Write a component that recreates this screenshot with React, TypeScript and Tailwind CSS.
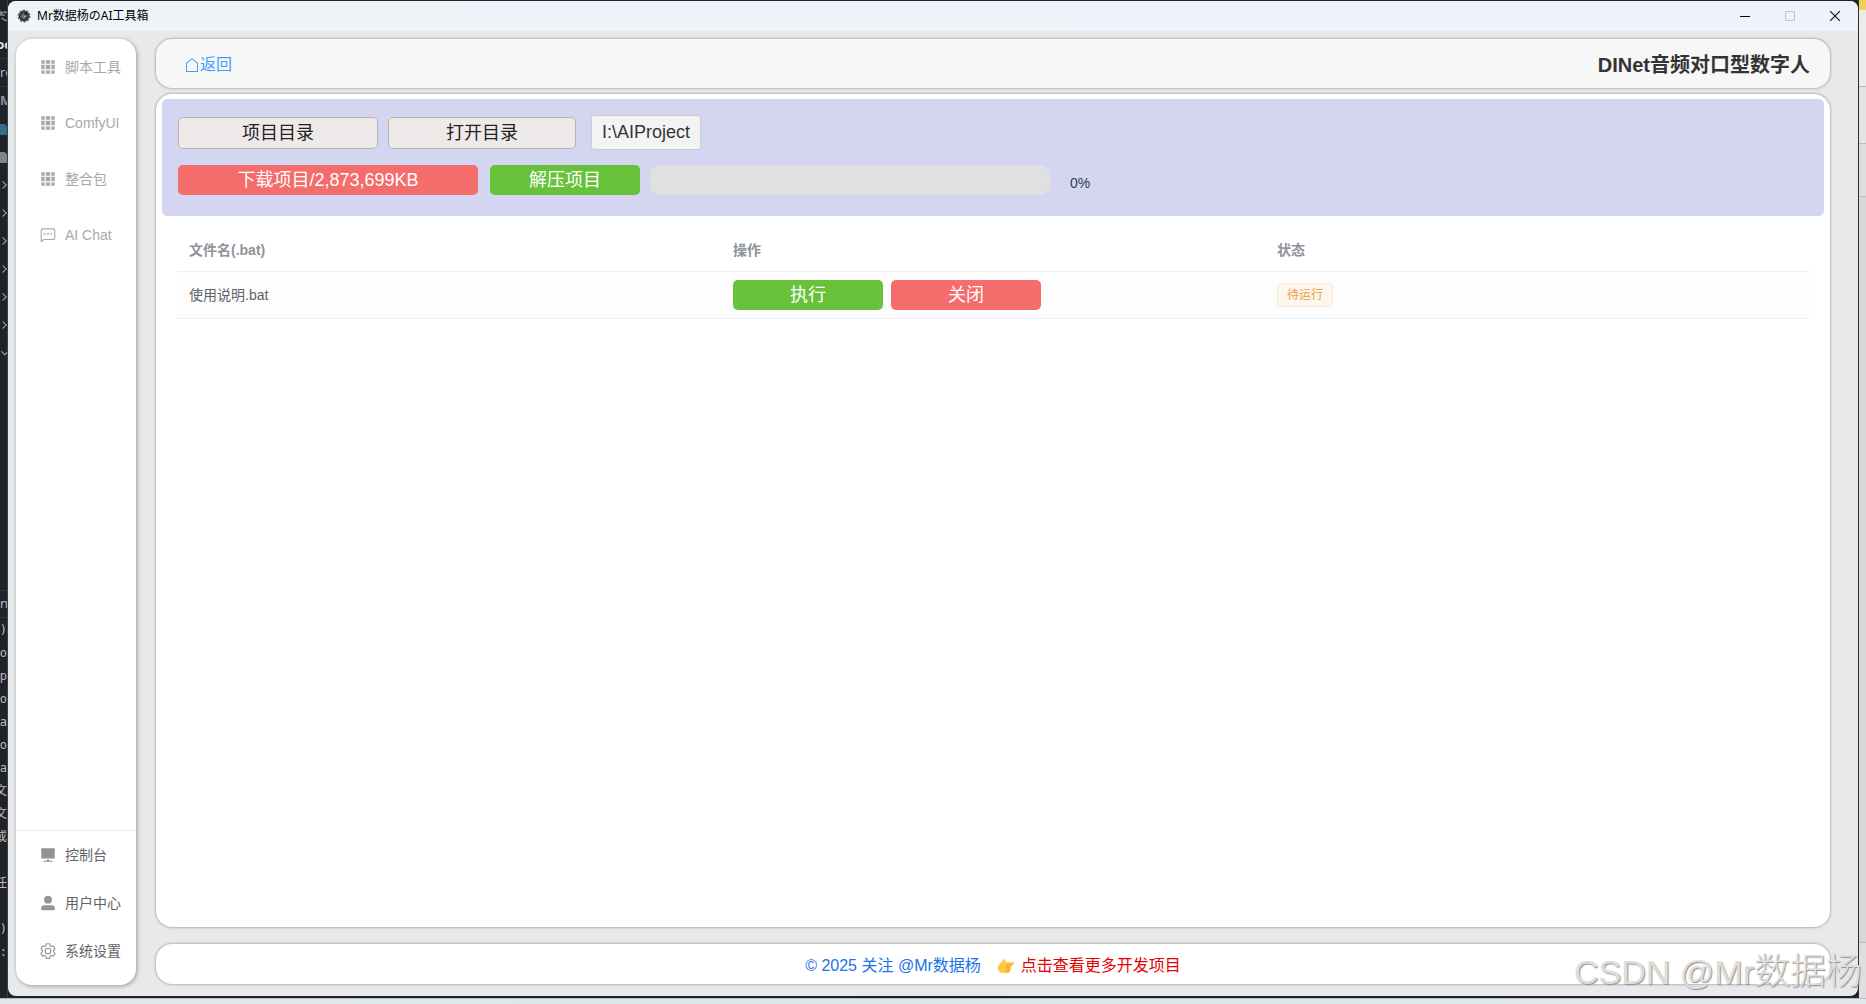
import React from 'react';

const GRID =
  'M640 384v256H384V384h256zm64 0h192v256H704V384zm-64 512H384V704h256v192zm64 0V704h192v192H704zm-64-768v192H384V128h256zm64 0h192v192H704V128zM320 384v256H128V384h192zm0 512H128V704h192v192zm0-768v192H128V128h192z';
const CHAT =
  'M273.536 736H800a64 64 0 0 0 64-64V256a64 64 0 0 0-64-64H224a64 64 0 0 0-64 64v570.88L273.536 736zM296 800 147.968 918.4A32 32 0 0 1 96 893.44V256a128 128 0 0 1 128-128h576a128 128 0 0 1 128 128v416a128 128 0 0 1-128 128H296zM512 499.2a51.2 51.2 0 1 1 0-102.4 51.2 51.2 0 0 1 0 102.4zm192 0a51.2 51.2 0 1 1 0-102.4 51.2 51.2 0 0 1 0 102.4zm-384 0a51.2 51.2 0 1 1 0-102.4 51.2 51.2 0 0 1 0 102.4z';
const PLATFORM = 'M448 832v-64h128v64h192v64H256v-64h192zM128 704V128h768v576H128z';
const USER =
  'M288 320a224 224 0 1 0 448 0 224 224 0 1 0-448 0zm544 608H160a32 32 0 0 1-32-32v-96a160 160 0 0 1 160-160h448a160 160 0 0 1 160 160v96a32 32 0 0 1-32 32z';
const SETTING =
  'M600.704 64a32 32 0 0 1 30.464 22.208l35.2 109.376c14.784 7.232 28.928 15.36 42.432 24.512l112.384-24.192a32 32 0 0 1 34.432 15.36L944.32 364.8a32 32 0 0 1-4.032 37.504l-77.12 85.12a357.12 357.12 0 0 1 0 49.024l77.12 85.248a32 32 0 0 1 4.032 37.504l-88.704 153.6a32 32 0 0 1-34.432 15.296L708.8 803.904c-13.44 9.088-27.648 17.28-42.368 24.512l-35.264 109.376A32 32 0 0 1 600.704 960H423.296a32 32 0 0 1-30.464-22.208L357.696 828.48a351.616 351.616 0 0 1-42.56-24.64l-112.32 24.256a32 32 0 0 1-34.432-15.36L79.68 659.2a32 32 0 0 1 4.032-37.504l77.12-85.248a357.12 357.12 0 0 1 0-48.896l-77.12-85.248A32 32 0 0 1 79.68 364.8l88.704-153.6a32 32 0 0 1 34.432-15.296l112.32 24.256c13.568-9.152 27.776-17.408 42.56-24.64l35.2-109.312A32 32 0 0 1 423.232 64H600.64zm-23.424 64H446.72l-36.352 113.088-24.512 11.968a294.113 294.113 0 0 0-34.816 20.096l-22.656 15.36-116.224-25.088-65.28 113.152 79.68 88.192-1.92 27.136a293.12 293.12 0 0 0 0 40.192l1.92 27.136-79.808 88.192 65.344 113.152 116.224-25.024 22.656 15.296a294.113 294.113 0 0 0 34.816 20.096l24.512 11.968L446.72 896h130.688l36.48-113.152 24.448-11.904a288.282 288.282 0 0 0 34.752-20.096l22.592-15.296 116.288 25.024 65.28-113.152-79.744-88.192 1.92-27.136a293.12 293.12 0 0 0 0-40.256l-1.92-27.136 79.808-88.128-65.344-113.152-116.288 24.96-22.592-15.232a287.616 287.616 0 0 0-34.752-20.096l-24.448-11.904L577.344 128zM512 320a192 192 0 1 1 0 384 192 192 0 0 1 0-384zm0 64a128 128 0 1 0 0 256 128 128 0 0 0 0-256z';
const HOUSE =
  'M192 413.952V896h640V413.952L512 147.328 192 413.952zM139.52 374.4l352-293.312a32 32 0 0 1 40.96 0l352 293.312A32 32 0 0 1 896 398.976V928a32 32 0 0 1-32 32H160a32 32 0 0 1-32-32V398.976a32 32 0 0 1 11.52-24.576z';

interface MenuItem {
  label: string;
  icon: string;
}

const topMenu: MenuItem[] = [
  { label: '脚本工具', icon: GRID },
  { label: 'ComfyUI', icon: GRID },
  { label: '整合包', icon: GRID },
  { label: 'AI Chat', icon: CHAT },
];

const bottomMenu: MenuItem[] = [
  { label: '控制台', icon: PLATFORM },
  { label: '用户中心', icon: USER },
  { label: '系统设置', icon: SETTING },
];

const files = [{ name: '使用说明.bat', status: '待运行' }];

const terminalLines = [')', 'o', 'p', 'o', 'a', 'o', 'a', '文', '文', '或', '', '任', '', ')', ':'];

const Icon: React.FC<{ path: string; className?: string }> = ({ path, className }) => (
  <svg viewBox="0 0 1024 1024" className={className} fill="currentColor" aria-hidden="true">
    <path d={path} />
  </svg>
);

const Chevron: React.FC<{ down?: boolean }> = ({ down }) => (
  <div className="flex h-7 items-center justify-end">
    <svg viewBox="0 0 8 10" className="h-[10px] w-2" fill="none" stroke="#b4b8bd" strokeWidth="1.2">
      <path d={down ? 'M1.5 3 L5.5 7 L9.5 3' : 'M3 1 L7 5 L3 9'} />
    </svg>
  </div>
);

// The editor window that shows behind the left edge of the app
const EditorEdge = () => (
  <div className="flex w-2 shrink-0 flex-col overflow-hidden border-r border-[#3c4146] bg-[#1f2226] font-['Open_Sans','Noto_Sans_CJK_SC',sans-serif] text-[13px] text-[#b9bdc2]">
    <div className="flex h-[31px] shrink-0 items-center">
      <svg viewBox="0 0 8 14" className="h-[14px] w-2" fill="none" stroke="#8d9196" strokeWidth="1.6">
        <path d="M1 1v5h5M1 5a6 6 0 0 1 7-2M8 12a6 6 0 0 1-6-3" />
      </svg>
    </div>
    <div className="flex h-7 shrink-0 items-center justify-center border-b border-[#33373b] font-bold text-[#e4e6e8]">oc</div>
    <div className="flex h-7 shrink-0 items-center border-b border-[#33373b]">ro</div>
    <div className="flex h-7 shrink-0 items-center font-bold text-[#8d9196]">M</div>
    <div className="flex h-7 shrink-0 items-center">
      <span className="h-[11px] w-full rounded-tr bg-[#2f6f87]" />
    </div>
    <div className="flex h-7 shrink-0 items-center">
      <span className="h-[11px] w-full rounded-tr bg-[#7f868d]" />
    </div>
    {[0, 1, 2, 3, 4, 5].map(i => (
      <Chevron key={i} />
    ))}
    <Chevron down />
    <div className="mt-auto flex h-7 shrink-0 items-center border-y border-[#33373b]">n</div>
    <div className="pb-[35px] font-['DejaVu_Sans_Mono','Noto_Sans_CJK_SC',monospace] text-xs">
      {terminalLines.map((line, i) => (
        <div key={i} className="flex h-[23px] items-center justify-end">
          {line}
        </div>
      ))}
    </div>
  </div>
);

const TitleBar = () => (
  <header className="flex h-[30px] shrink-0 items-center bg-gradient-to-r from-[#eff4f9] to-[#eef2fb] pl-[9px] font-['Noto_Sans','Noto_Sans_CJK_SC',sans-serif] text-xs text-black">
    <svg viewBox="0 0 14 14" className="mr-[6px] h-[14px] w-[14px]" aria-hidden="true">
      <circle cx="7" cy="7" r="5.4" fill="#33383b" />
      <circle cx="7" cy="7" r="5.6" fill="none" stroke="#5a5f62" strokeWidth="1.6" strokeDasharray="2.2 1.3" />
      <path d="M3.5 7.5 6.5 3.5l1.800 1.500L5.200 9.500z" fill="#3f7f9c" />
      <path d="M5.600 8.800 8.600 5.800l1.200 1.200L7 9.800z" fill="#d79a3a" />
      <circle cx="8.6" cy="4.6" r="1.2" fill="#16191b" />
    </svg>
    <h1>Mr数据杨のAI工具箱</h1>
    <div className="ml-auto flex h-full">
      <button aria-label="最小化" className="flex w-[45px] items-center justify-center">
        <svg viewBox="0 0 10 10" className="h-[10px] w-[10px]" stroke="#000">
          <path d="M0 5.5h10" />
        </svg>
      </button>
      <button aria-label="最大化" disabled className="flex w-[45px] items-center justify-center">
        <svg viewBox="0 0 10 10" className="h-[10px] w-[10px]" fill="none" stroke="#bfc2c6">
          <rect x="0.5" y="0.5" width="9" height="9" rx="0.5" />
        </svg>
      </button>
      <button aria-label="关闭" className="flex w-[46px] items-center justify-center">
        <svg viewBox="0 0 10 10" className="h-[10px] w-[10px]" fill="none" stroke="#111" strokeWidth="1.1">
          <path d="M0 0l10 10M10 0L0 10" />
        </svg>
      </button>
    </div>
  </header>
);

const Sidebar = () => (
  <nav className="flex w-[120px] shrink-0 flex-col overflow-hidden rounded-2xl bg-white pb-[10px] text-sm shadow-[1px_1px_4px_rgba(0,0,0,0.35)]">
    {topMenu.map(item => (
      <a key={item.label} href="#" className="flex h-14 items-center gap-2 pl-[23px] whitespace-nowrap text-[#a6a9ad]">
        <Icon path={item.icon} className="h-[18px] w-[18px] shrink-0" />
        {item.label}
      </a>
    ))}
    <div className="mt-auto border-t border-[#ebebeb]">
      {bottomMenu.map(item => (
        <a key={item.label} href="#" className="flex h-12 items-center gap-2 pl-[23px] whitespace-nowrap text-[#606266]">
          <Icon path={item.icon} className="h-[18px] w-[18px] shrink-0 text-[#909399]" />
          {item.label}
        </a>
      ))}
    </div>
  </nav>
);

const ProjectPanel = () => (
  <section className="mx-[6px] rounded-[5px] bg-[#d4d5f0] px-4 pt-4 pb-[21px] text-lg text-[#222]">
    <div className="flex items-center">
      <button className="h-8 w-[200px] rounded-[5px] border border-[#bab6ae] bg-[#eeeae9]">项目目录</button>
      <button className="ml-[10px] h-8 w-[188px] rounded-[5px] border border-[#bab6ae] bg-[#eeeae9]">打开目录</button>
      <input
        readOnly
        aria-label="项目路径"
        value="I:\AIProject"
        className="ml-[15px] h-[35px] w-[110px] rounded-[3px] border border-[#ccc] bg-[#f3f3f3] px-[10px] text-[#333] outline-none"
      />
    </div>
    <div className="mt-[15px] flex items-center text-white">
      <button className="h-[30px] w-[300px] rounded-[5px] bg-[#f56c6c]">下载项目/2,873,699KB</button>
      <button className="ml-3 h-[30px] w-[150px] rounded-[5px] bg-[#67c23a]">解压项目</button>
      <div
        role="progressbar"
        aria-label="下载进度"
        aria-valuenow={0}
        className="ml-[10px] h-[30px] w-[400px] rounded-[10px] bg-[#e0e0e0]"
      />
      <span className="ml-5 pt-[6px] text-sm text-[#2c3e50]">0%</span>
    </div>
  </section>
);

const FileTable = () => (
  <div className="mx-[21px] mt-[13px]">
    <table className="w-full table-fixed text-left text-sm text-[#606266]">
      <thead>
        <tr className="h-[42px] border-b border-[#ebeef5] text-[#909399]">
          <th className="px-3 font-bold">文件名(.bat)</th>
          <th className="px-3 font-bold">操作</th>
          <th className="px-3 font-bold">状态</th>
        </tr>
      </thead>
      <tbody>
        {files.map(file => (
          <tr key={file.name} className="h-[47px] border-b border-[#ebeef5] bg-[#fdfdfd]">
            <td className="px-3">{file.name}</td>
            <td className="px-3">
              <div className="flex gap-2 text-lg text-white">
                <button className="h-[30px] w-[150px] rounded-[5px] bg-[#67c23a]">执行</button>
                <button className="h-[30px] w-[150px] rounded-[5px] bg-[#f56c6c]">关闭</button>
              </div>
            </td>
            <td className="px-3">
              <span className="flex h-6 w-14 items-center justify-center rounded border border-[#faecd8] bg-[#fdf6ec] text-xs text-[#e6a23c]">
                {file.status}
              </span>
            </td>
          </tr>
        ))}
      </tbody>
    </table>
  </div>
);

const PointingHand = () => (
  <svg viewBox="0 0 18 16" className="h-4 w-[18px]" aria-hidden="true">
    <path
      d="M.8 9.500C.8 6.800 2.800 6 4.200 4.400L6.600 1.600c.6-.7 1.700-.5 1.900.3.200.8-.2 1.600-.7 2.400h8.300c1.500 0 1.500 2.600 0 2.600h-3.300v6c0 1.200-.8 2.100-1.900 2.100H5.800C2.800 15 .8 12.800.8 9.500z"
      fill="#ffc83d"
    />
    <path d="M8.600 7.100h4.600a1.300 1.300 0 0 1 0 2.600H8.600zM8.600 9.700h4a1.300 1.300 0 0 1 0 2.600h-4zM8.400 12.300h3.200a1.300 1.300 0 0 1 0 2.500H8.400z" fill="#fbbd35" />
    <path d="M9 7h6.500M9.500 9.700h3.500M9.500 12.300h2.800" stroke="#d9902b" strokeWidth="0.7" />
  </svg>
);

export default function App() {
  return (
    <div className="relative flex min-h-screen flex-col overflow-hidden bg-[#1f2226] font-['Liberation_Sans','Noto_Sans_CJK_SC',sans-serif]">
      <div className="flex flex-1">
        <EditorEdge />
        <div className="flex min-w-0 flex-1 flex-col pt-px pb-[2px]">
          <div className="flex flex-1 flex-col overflow-hidden rounded-lg bg-[#e8e9eb]">
            <TitleBar />
            <div className="flex flex-1 gap-5 pt-2 pr-7 pb-[11px] pl-2">
              <Sidebar />
              <main className="flex min-w-0 flex-1 flex-col pb-px">
                <div className="flex h-[49px] shrink-0 items-center justify-between rounded-2xl bg-[#f7f7f7] pt-[2px] pr-5 pl-7 shadow-[0_0_3px_rgba(0,0,0,0.45)]">
                  <a href="#" className="flex items-center text-base text-[#409eff]">
                    <Icon path={HOUSE} className="h-4 w-4" />
                    返回
                  </a>
                  <h2 className="text-xl font-bold text-[#333]">DINet音频对口型数字人</h2>
                </div>
                <div className="mt-[6px] flex-1 rounded-2xl bg-white pt-[5px] shadow-[0_0_3px_rgba(0,0,0,0.45)]">
                  <ProjectPanel />
                  <FileTable />
                </div>
                <footer className="mt-[17px] flex h-10 shrink-0 items-center justify-center gap-4 rounded-2xl bg-white pt-[3px] text-base shadow-[0_0_3px_rgba(0,0,0,0.45)]">
                  <a href="#" className="text-[#1a73e8]">
                    © 2025 关注 @Mr数据杨
                  </a>
                  <a href="#" className="flex items-center gap-[6px] text-[#e60000]">
                    <PointingHand />
                    点击查看更多开发项目
                  </a>
                </footer>
              </main>
            </div>
          </div>
        </div>
        {/* another window showing along the right edge */}
        <div className="flex w-2 shrink-0 flex-col border-l border-[#2b2d31] bg-[#d8d8d8]">
          <div className="h-[10px] bg-[#f3cf57]" />
          <div className="h-[77px] border-b border-[#b5b5b5] bg-[#ececec]" />
          <div className="h-[57px] border-b border-[#bdbdbd] bg-[#e3e3e3]" />
          <div className="h-[53px] border-b border-[#bdbdbd] bg-[#dedede]" />
          <div className="mt-auto h-[56px] border-t border-[#bdbdbd] bg-[#dedede]" />
        </div>
      </div>
      <div className="h-[6px] shrink-0 border-t border-[#b4babd] bg-gradient-to-r from-[#e0e8ec] via-[#d9e8e6] to-[#e0e8ec]" />
      <div className="pointer-events-none absolute right-1 bottom-3 font-['Liberation_Sans','Noto_Sans_CJK_SC',sans-serif] text-4xl leading-10 font-light whitespace-nowrap text-[#dedede] [text-shadow:1px_1px_1px_#909090]">
        <span className="text-[34px]">CSDN @Mr</span>数据杨
      </div>
    </div>
  );
}
